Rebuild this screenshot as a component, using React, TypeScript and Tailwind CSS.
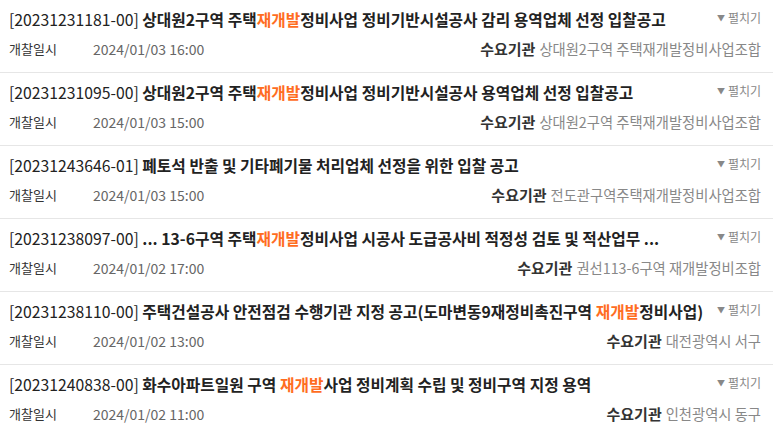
import React from 'react';

type Notice = {
    no: string;
    title: React.ReactNode;
    date: string;
    agency: string;
};

const Hl = ({ children }: { children: React.ReactNode }) => (
    <span className="text-[#ff6d1f]">{children}</span>
);

const notices: Notice[] = [
    {
        no: '20231231181-00',
        title: <>상대원2구역 주택<Hl>재개발</Hl>정비사업 정비기반시설공사 감리 용역업체 선정 입찰공고</>,
        date: '2024/01/03 16:00',
        agency: '상대원2구역 주택재개발정비사업조합',
    },
    {
        no: '20231231095-00',
        title: <>상대원2구역 주택<Hl>재개발</Hl>정비사업 정비기반시설공사 용역업체 선정 입찰공고</>,
        date: '2024/01/03 15:00',
        agency: '상대원2구역 주택재개발정비사업조합',
    },
    {
        no: '20231243646-01',
        title: <>폐토석 반출 및 기타폐기물 처리업체 선정을 위한 입찰 공고</>,
        date: '2024/01/03 15:00',
        agency: '전도관구역주택재개발정비사업조합',
    },
    {
        no: '20231238097-00',
        title: <>... 13-6구역 주택<Hl>재개발</Hl>정비사업 시공사 도급공사비 적정성 검토 및 적산업무 ...</>,
        date: '2024/01/02 17:00',
        agency: '권선113-6구역 재개발정비조합',
    },
    {
        no: '20231238110-00',
        title: <>주택건설공사 안전점검 수행기관 지정 공고(도마변동9재정비촉진구역 <Hl>재개발</Hl>정비사업)</>,
        date: '2024/01/02 13:00',
        agency: '대전광역시 서구',
    },
    {
        no: '20231240838-00',
        title: <>화수아파트일원 구역 <Hl>재개발</Hl>사업 정비계획 수립 및 정비구역 지정 용역</>,
        date: '2024/01/02 11:00',
        agency: '인천광역시 동구',
    },
];

export default function App() {
    return (
        <div
            className="w-[773px] h-[430px] overflow-hidden bg-white"
            style={{ fontFamily: '"Noto Sans CJK KR", "Noto Sans", sans-serif' }}
        >
            <ul>
                {notices.map((n) => (
                    <li key={n.no} className="relative border-b border-[#e6e6e6] pl-[9px] pr-[12px] pt-[9px] pb-[13px]">
                        <div className="h-[22px] leading-[22px] text-[15.75px] font-semibold text-[#222] whitespace-nowrap pr-[60px]">
                            <span className="font-normal">[{n.no}]</span> {n.title}
                        </div>
                        <button className="absolute right-[12px] top-[8px] flex items-center gap-[3px] text-[12px] leading-[20px] text-[#888]">
                            <span className="text-[8px]">▼</span>
                            펼치기
                        </button>
                        <div className="mt-[8px] flex h-[20px] items-center justify-between text-[13px] leading-[20px]">
                            <div className="flex">
                                <span className="w-[84px] text-[#333]">개찰일시</span>
                                <span className="text-[14px] text-[#666]">{n.date}</span>
                            </div>
                            <div className="flex items-baseline gap-[4px]">
                                <span className="text-[15px] font-bold text-[#333]">수요기관</span>
                                <span className="text-[14.3px] text-[#888]">{n.agency}</span>
                            </div>
                        </div>
                    </li>
                ))}
            </ul>
        </div>
    );
}
